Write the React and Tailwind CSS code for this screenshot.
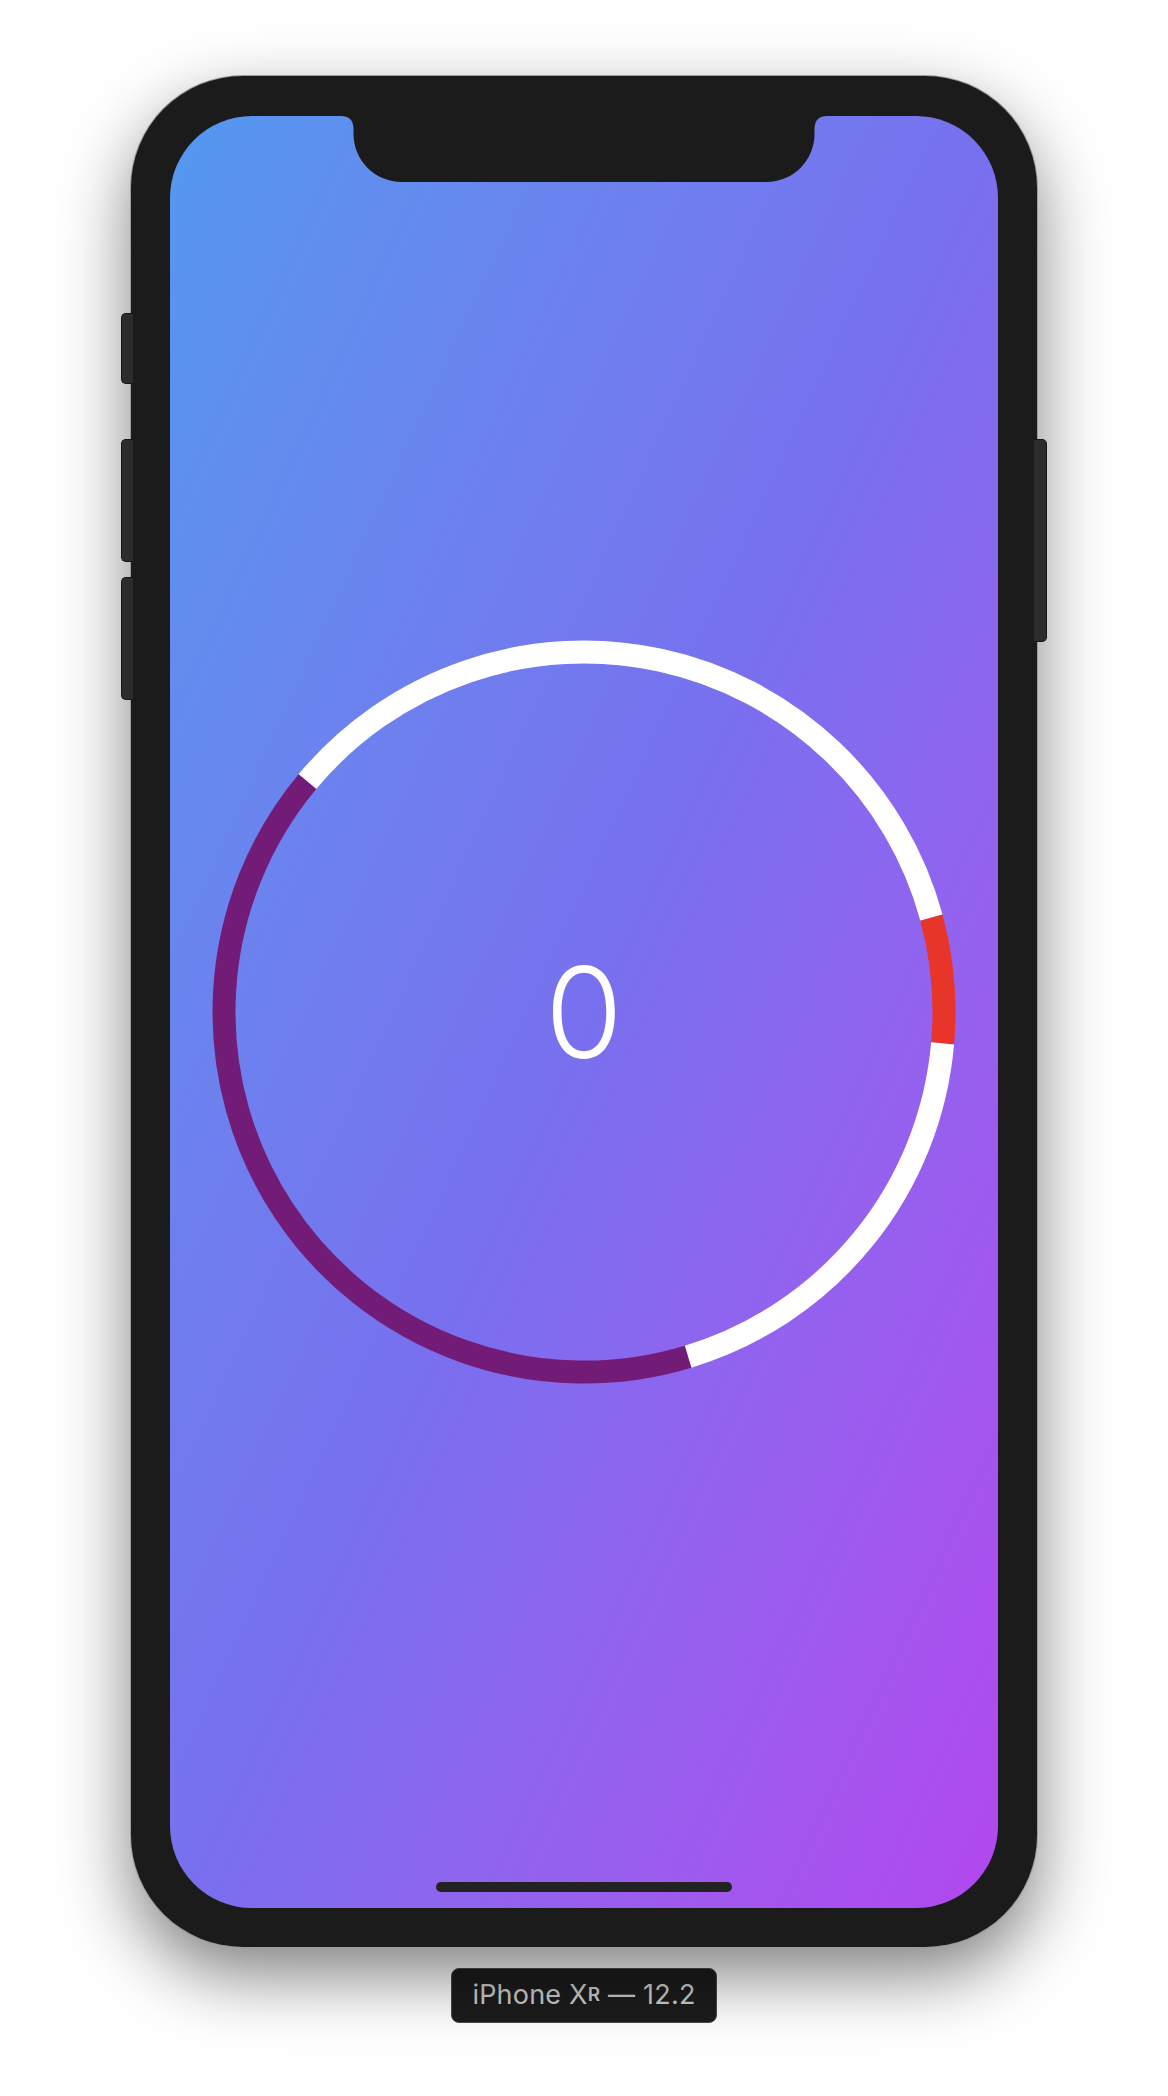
import React from "react";

const R = 360;
const C = 372;

function arc(a1, a2) {
  const p = (a) => {
    const t = (a * Math.PI) / 180;
    return [C + R * Math.cos(t), C + R * Math.sin(t)];
  };
  const [x1, y1] = p(a1);
  const [x2, y2] = p(a2);
  const large = a2 - a1 > 180 ? 1 : 0;
  return `M${x1} ${y1} A${R} ${R} 0 ${large} 1 ${x2} ${y2}`;
}

const segments = [
  { from: 219.8, to: 344.8, color: "#ffffff" },
  { from: 344.8, to: 365, color: "#e8352a" },
  { from: 365, to: 433.2, color: "#ffffff" },
  { from: 433.2, to: 579.8, color: "#731c77" },
];

function Ring() {
  return (
    <svg width="744" height="744" viewBox="0 0 744 744" className="absolute">
      {segments.map((s, i) => (
        <path key={i} d={arc(s.from, s.to)} fill="none" stroke={s.color} strokeWidth="23" />
      ))}
    </svg>
  );
}

function Notch() {
  return (
    <svg width="487" height="66" viewBox="0 0 487 66" className="absolute top-0 left-1/2 -translate-x-1/2">
      <path
        d="M0 0 Q13 0 13 13 V18 A48 48 0 0 0 61 66 H426 A48 48 0 0 0 474 18 V13 Q474 0 487 0 Z"
        fill="#1b1b1b"
      />
    </svg>
  );
}

export default function App() {
  return (
    <div className="min-h-screen bg-white flex flex-col items-center pt-[76px] font-['Inter',sans-serif]">
      <div className="relative w-[906px] h-[1871px] rounded-[112px] bg-[#1b1b1b] pt-[40px] pb-[39px] px-[39px] shadow-[0_0_0_1px_#9c9c9c,0_28px_70px_rgba(0,0,0,0.5)]">
        {/* side buttons */}
        <div className="absolute left-[-10px] top-[237px] flex flex-col">
          <div className="w-[12px] h-[71px] rounded-l-[5px] bg-[#2c2c2c] border border-r-0 border-[#161616]" />
          <div className="mt-[55px] w-[12px] h-[123px] rounded-l-[5px] bg-[#2c2c2c] border border-r-0 border-[#161616]" />
          <div className="mt-[15px] w-[12px] h-[123px] rounded-l-[5px] bg-[#2c2c2c] border border-r-0 border-[#161616]" />
        </div>
        <div className="absolute right-[-10px] top-[363px] w-[13px] h-[203px] rounded-r-[5px] bg-[#2c2c2c] border border-l-0 border-[#161616]" />

        <div className="relative w-full h-full rounded-[82px] overflow-hidden bg-linear-to-br from-[#5398ef] via-[#7870ee] to-[#b247ee] flex items-center justify-center">
          <Notch />
          <Ring />
          <span className="relative text-white text-[126px] font-light leading-none">0</span>
          <div className="absolute bottom-[16px] left-1/2 -translate-x-1/2 w-[296px] h-[10px] rounded-full bg-[#222222]" />
        </div>
      </div>

      <div className="mt-[21px] w-[266px] h-[55px] rounded-[8px] bg-[#1c1c1c] border border-[#4a4a4a] flex items-center justify-center text-[27px] text-[#cfcfcf] tracking-[0.2px]">
        iPhone X<span className="text-[19px] font-semibold">R</span>&nbsp;— 12.2
      </div>
    </div>
  );
}
